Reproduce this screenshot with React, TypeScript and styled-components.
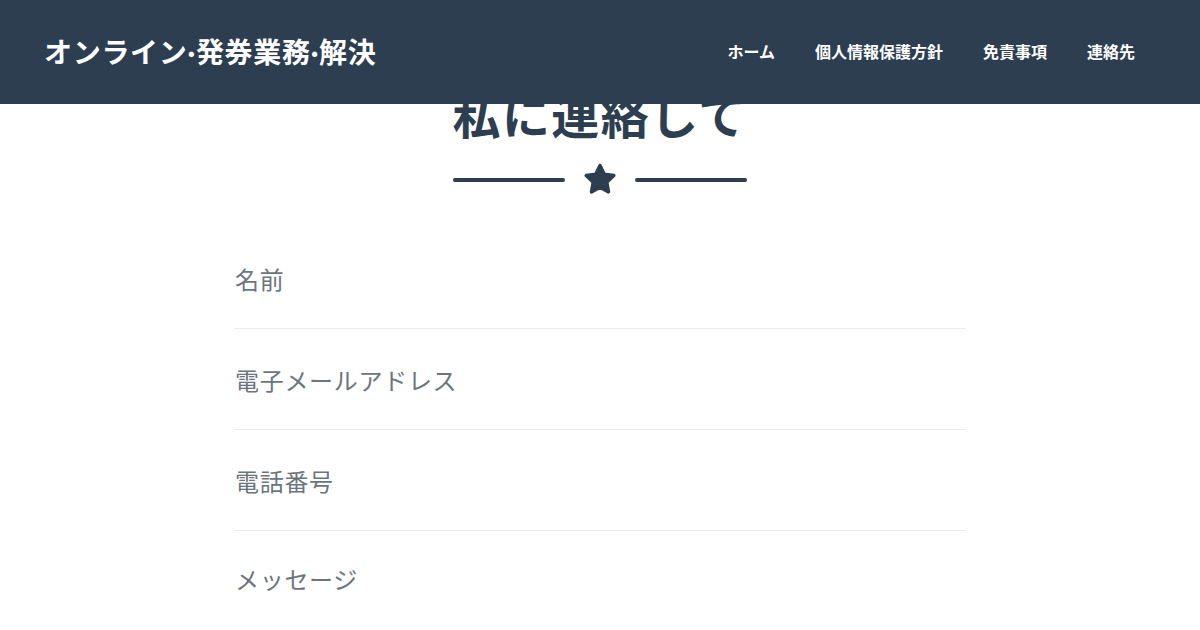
import React from "react";
import styled, { createGlobalStyle } from "styled-components";

const GlobalStyle = createGlobalStyle`
  html, body { margin: 0; padding: 0; background: #ffffff; }
  body {
    font-family: Lato, "Noto Sans CJK JP", "Noto Sans", sans-serif;
    -webkit-font-smoothing: antialiased;
  }
  * { box-sizing: border-box; }
`;

const NavBar = styled.nav`
  position: fixed;
  top: 0;
  left: 0;
  right: 0;
  height: 104px;
  background: #2c3e50;
  display: flex;
  align-items: center;
  justify-content: space-between;
  padding: 0 45px 0 44px;
  z-index: 10;
`;

const Brand = styled.a`
  color: #ffffff;
  font-size: 28px;
  font-weight: 700;
  letter-spacing: 0.7px;
  text-decoration: none;
  white-space: nowrap;
  margin-top: -2px;
`;

const NavList = styled.ul`
  display: flex;
  list-style: none;
  margin: -2px 0 0;
  padding: 0;
`;

const NavLink = styled.a`
  display: block;
  padding: 0 20px;
  color: #ffffff;
  font-size: 16px;
  font-weight: 700;
  text-decoration: none;
  white-space: nowrap;
`;

const Main = styled.main`
  padding-top: 87px;
`;

const Heading = styled.h2`
  margin: 0;
  text-align: center;
  font-size: 48px;
  line-height: 1.2;
  font-weight: 700;
  letter-spacing: 1.4px;
  color: #2c3e50;
`;

const Divider = styled.div`
  display: flex;
  justify-content: center;
  align-items: center;
  gap: 17px;
  margin-top: 17px;
  height: 36px;
`;

const DividerLine = styled.span`
  display: block;
  width: 112px;
  height: 4px;
  border-radius: 2px;
  background: #2c3e50;
`;

const Form = styled.form`
  width: 732px;
  margin: 30px auto 0;
`;

const FieldRow = styled.div<{ $last?: boolean }>`
  height: ${(p) => (p.$last ? "auto" : "101px")};
  border-bottom: ${(p) => (p.$last ? "none" : "1px solid #e9ecef")};
  padding-top: ${(p) => (p.$last ? "31px" : "34px")};
`;

const fieldText = `
  display: block;
  width: 100%;
  border: none;
  outline: none;
  padding: 0 0 0 1px;
  font-family: inherit;
  font-size: 24px;
  line-height: 36px;
  letter-spacing: 0.7px;
  color: #495057;
  background: transparent;
  &::placeholder { color: #6c757d; opacity: 1; }
`;

const Input = styled.input`
  ${fieldText}
  height: 36px;
`;

const TextArea = styled.textarea`
  ${fieldText}
  resize: none;
`;

const Star = () => (
  <svg width="36" height="36" viewBox="0 0 36 36" aria-hidden="true">
    <path
      d="M18 3.5 L22.2 12.3 L31.8 13.6 L24.8 20.3 L26.5 29.9 L18 25.3 L9.5 29.9 L11.2 20.3 L4.2 13.6 L13.8 12.3 Z"
      fill="#2c3e50"
      stroke="#2c3e50"
      strokeWidth="3.5"
      strokeLinejoin="round"
    />
  </svg>
);

export default function App() {
  return (
    <>
      <GlobalStyle />
      <NavBar>
        <Brand href="#">オンライン·発券業務·解決</Brand>
        <NavList>
          <li><NavLink href="#">ホーム</NavLink></li>
          <li><NavLink href="#">個人情報保護方針</NavLink></li>
          <li><NavLink href="#">免責事項</NavLink></li>
          <li><NavLink href="#">連絡先</NavLink></li>
        </NavList>
      </NavBar>
      <Main>
        <Heading>私に連絡して</Heading>
        <Divider>
          <DividerLine />
          <Star />
          <DividerLine />
        </Divider>
        <Form>
          <FieldRow><Input placeholder="名前" /></FieldRow>
          <FieldRow><Input placeholder="電子メールアドレス" /></FieldRow>
          <FieldRow><Input placeholder="電話番号" /></FieldRow>
          <FieldRow $last><TextArea rows={5} placeholder="メッセージ" /></FieldRow>
        </Form>
      </Main>
    </>
  );
}
